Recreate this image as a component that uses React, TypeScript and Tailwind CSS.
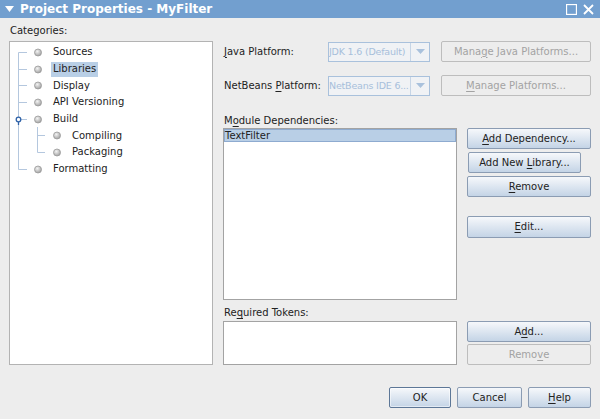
import type { ReactNode } from "react";

const LINE = "#b4c7de";

type Guide = "first" | "mid" | "last" | "node";

function Bullet({ cx }: { cx: number }) {
  return (
    <>
      <defs>
        <radialGradient id={`b${cx}`} cx="40%" cy="35%" r="70%">
          <stop offset="0%" stopColor="#f4f4f4" />
          <stop offset="100%" stopColor="#9c9c9c" />
        </radialGradient>
      </defs>
      <circle cx={cx} cy={8.5} r={3.5} fill={`url(#b${cx})`} stroke="#9a9a9a" strokeWidth={0.8} />
    </>
  );
}

function TreeRow({
  label,
  guide,
  sub,
  selected,
}: {
  label: string;
  guide: Guide;
  sub?: "mid" | "last";
  selected?: boolean;
}) {
  const w = sub ? 60 : 41;
  const top = guide === "first" ? 8.5 : 0;
  const bottom = guide === "last" ? 8.5 : 17;
  return (
    <div className="flex h-[16.7px] items-center">
      <svg width={w} height={17} className="shrink-0 overflow-visible">
        <line x1={8.5} y1={top} x2={8.5} y2={bottom} stroke={LINE} />
        {!sub && <line x1={8.5} y1={8.5} x2={17} y2={8.5} stroke={LINE} />}
        {guide === "node" && (
          <>
            <circle cx={8.5} cy={8.5} r={2.3} fill="#ffffff" stroke="#2f62a8" strokeWidth={1.3} />
            <line x1={8.5} y1={10.8} x2={8.5} y2={14} stroke="#2f62a8" strokeWidth={1.3} />
          </>
        )}
        {sub && (
          <>
            <line x1={27.5} y1={0} x2={27.5} y2={sub === "last" ? 8.5 : 17} stroke={LINE} />
            <line x1={27.5} y1={8.5} x2={35} y2={8.5} stroke={LINE} />
          </>
        )}
        <Bullet cx={sub ? 47 : 28} />
      </svg>
      <span
        className={
          "flex h-[15px] items-center px-[2px] " + (selected ? "bg-[#b9cfe6]" : "")
        }
      >
        {label}
      </span>
    </div>
  );
}

function Btn({
  children,
  w,
  h = "h-[21px]",
  disabled,
  primary,
}: {
  children: ReactNode;
  w: string;
  h?: string;
  disabled?: boolean;
  primary?: boolean;
}) {
  const look = disabled
    ? "border-[#bdbdbd] bg-[#ededed] text-[#a3a3a3]"
    : primary
      ? "border-[#5d7797] bg-gradient-to-b from-[#f6f8fb] to-[#c4d4e6] text-[#222222] shadow-[inset_0_0_0_1px_#ffffff80]"
      : "border-[#8b9cb3] bg-gradient-to-b from-[#f6f8fb] to-[#c4d4e6] text-[#222222]";
  return (
    <button
      type="button"
      disabled={disabled}
      className={`flex shrink-0 items-center justify-center rounded-[2px] border ${w} ${h} ${look}`}
    >
      {children}
    </button>
  );
}

function Combo({ text }: { text: string }) {
  return (
    <div className="flex h-[20px] w-[102px] shrink-0 border border-[#a9c1dc] bg-[#f0f2f5]">
      <span className="flex flex-1 items-center overflow-hidden whitespace-nowrap text-[9.5px] tracking-[-0.2px] text-[#a7bfdb]">
        {text}
      </span>
      <span className="flex w-[19px] shrink-0 items-center justify-center border-l border-[#c6d5e6]">
        <svg width="9" height="5">
          <path d="M0 0h9L4.5 5z" fill="#a9c1dc" />
        </svg>
      </span>
    </div>
  );
}

const U = ({ c }: { c: string }) => <span className="underline underline-offset-[2px]">{c}</span>;

export default function App() {
  return (
    <div className="flex h-[419px] w-[600px] flex-col bg-[#ededed] font-['DejaVu_Sans',sans-serif] text-[10px] leading-[12px] text-[#222222]">
      <header className="flex h-[18px] items-center bg-[#729fcf] pl-[5px] pr-[6px] text-white">
        <svg width="9" height="6" className="mr-[6px]">
          <path d="M0 0h9L4.5 6z" fill="#ffffff" />
        </svg>
        <span className="text-[12px] font-bold leading-[14px]">Project Properties - MyFilter</span>
        <div className="ml-auto flex items-center gap-[6px]">
          <svg width="11" height="11">
            <rect x="0.5" y="0.5" width="10" height="10" fill="none" stroke="#ffffff" strokeWidth="1.3" />
          </svg>
          <svg width="11" height="11">
            <path d="M1 1l9 9M10 1l-9 9" stroke="#ffffff" strokeWidth="1.8" />
          </svg>
        </div>
      </header>

      <div className="flex px-[9px]">
        <div className="flex w-[204px] flex-col">
          <div className="flex h-[23px] items-end pb-[4px] pl-[1px]">Categories:</div>
          <div className="flex h-[324px] flex-col border border-[#b3b3b3] bg-white pt-[2px]">
            <TreeRow label="Sources" guide="first" />
            <TreeRow label="Libraries" guide="mid" selected />
            <TreeRow label="Display" guide="mid" />
            <TreeRow label="API Versioning" guide="mid" />
            <TreeRow label="Build" guide="node" />
            <TreeRow label="Compiling" guide="mid" sub="mid" />
            <TreeRow label="Packaging" guide="mid" sub="last" />
            <TreeRow label="Formatting" guide="last" />
          </div>
        </div>

        <div className="ml-[10px] mt-[23px] flex w-[368px] flex-col">
          <div className="flex h-[21px] items-center">
            <span className="w-[105px] shrink-0 pl-[1px]">
              <U c="J" />ava Platform:
            </span>
            <Combo text="JDK 1.6 (Default)" />
            <div className="ml-[11px]">
              <Btn w="w-[150px]" disabled>
                <span>
                  Mana<U c="g" />e Java Platforms...
                </span>
              </Btn>
            </div>
          </div>
          <div className="mt-[13px] flex h-[21px] items-center">
            <span className="w-[105px] shrink-0 pl-[1px]">
              NetBeans <U c="P" />latform:
            </span>
            <Combo text="NetBeans IDE 6..." />
            <div className="ml-[11px]">
              <Btn w="w-[150px]" disabled>
                <span>
                  <U c="M" />anage Platforms...
                </span>
              </Btn>
            </div>
          </div>

          <div className="flex h-[32px] items-end pb-[1px] pl-[1px]">
            <span>
              M<U c="o" />dule Dependencies:
            </span>
          </div>
          <div className="flex">
            <div className="h-[172px] w-[234px] shrink-0 border border-[#a3a3a3] bg-white">
              <div className="flex h-[13px] items-center border border-[#8eabd0] bg-[#b9cfe6]">
                TextFilter
              </div>
            </div>
            <div className="ml-[10px] flex w-[124px] flex-col items-start">
              <Btn w="w-[124px]">
                <span>
                  <U c="A" />dd Dependency...
                </span>
              </Btn>
              <div className="mt-[3px] pl-[1px]">
                <Btn w="w-[113px]">
                  <span>
                    Add New <U c="L" />ibrary...
                  </span>
                </Btn>
              </div>
              <div className="mt-[3px]">
                <Btn w="w-[124px]">
                  <span>
                    <U c="R" />emove
                  </span>
                </Btn>
              </div>
              <div className="mt-[19px]">
                <Btn w="w-[124px]" h="h-[22px]">
                  <span>
                    <U c="E" />dit...
                  </span>
                </Btn>
              </div>
            </div>
          </div>

          <div className="flex h-[21px] items-end pb-[2px] pl-[1px]">
            <span>
              Re<U c="q" />uired Tokens:
            </span>
          </div>
          <div className="flex">
            <div className="h-[44px] w-[234px] shrink-0 border border-[#a3a3a3] bg-white" />
            <div className="ml-[10px] flex w-[124px] flex-col">
              <Btn w="w-[124px]">
                <span>
                  A<U c="d" />d...
                </span>
              </Btn>
              <div className="mt-[2px]">
                <Btn w="w-[124px]" disabled>
                  <span>
                    Remo<U c="v" />e
                  </span>
                </Btn>
              </div>
            </div>
          </div>
        </div>
      </div>

      <div className="mt-[22px] flex justify-end gap-[6px] pr-[9px]">
        <Btn w="w-[62px]" primary>
          OK
        </Btn>
        <Btn w="w-[65px]">Cancel</Btn>
        <Btn w="w-[63px]">
          <span>
            <U c="H" />elp
          </span>
        </Btn>
      </div>
    </div>
  );
}
